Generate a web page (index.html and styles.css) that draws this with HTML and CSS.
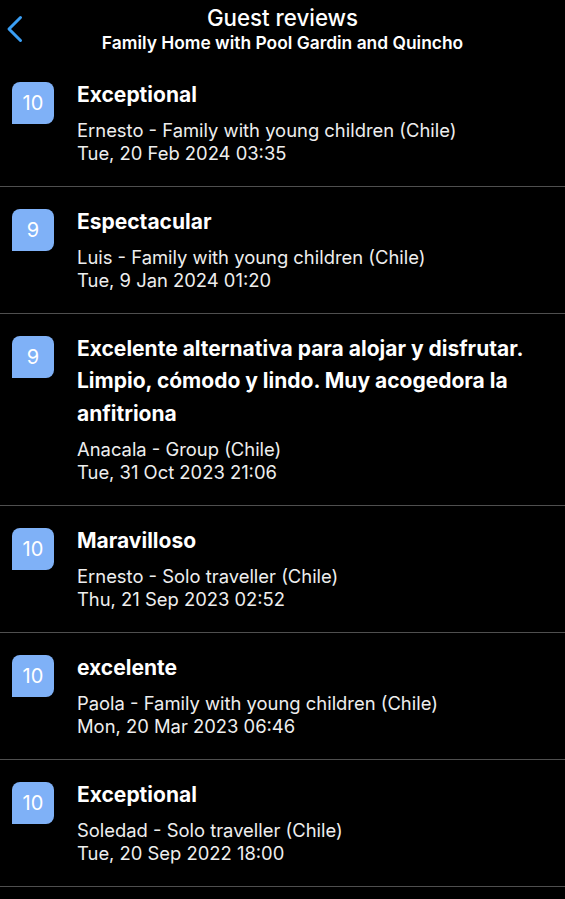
FILE: index.html
```html
<!DOCTYPE html>
<html lang="en">
<head>
    <meta charset="UTF-8">
    <meta name="viewport" content="width=device-width, initial-scale=1.0">
    <title>Guest reviews</title>
    <link rel="stylesheet" href="styles.css">
</head>
<body>
    <header class="top-bar">
        <a href="#" class="back-btn" aria-label="Back">
            <svg width="18" height="28" viewBox="0 0 18 28"><path d="M14.5 2.5 L3 14 L14.5 25.5" fill="none" stroke="#3a9ff5" stroke-width="3" stroke-linecap="round" stroke-linejoin="round"/></svg>
        </a>
        <div class="titles">
            <h1>Guest reviews</h1>
            <p class="subtitle">Family Home with Pool Gardin and Quincho</p>
        </div>
    </header>

    <ul class="reviews">
        <li class="review">
            <div class="score">10</div>
            <div class="review-body">
                <h2>Exceptional</h2>
                <p class="meta">Ernesto - Family with young children (Chile)<br>Tue, 20 Feb 2024 03:35</p>
            </div>
        </li>
        <li class="review">
            <div class="score">9</div>
            <div class="review-body">
                <h2>Espectacular</h2>
                <p class="meta">Luis - Family with young children (Chile)<br>Tue, 9 Jan 2024 01:20</p>
            </div>
        </li>
        <li class="review">
            <div class="score">9</div>
            <div class="review-body">
                <h2>Excelente alternativa para alojar y disfrutar. Limpio, cómodo y lindo. Muy acogedora la anfitriona</h2>
                <p class="meta">Anacala - Group (Chile)<br>Tue, 31 Oct 2023 21:06</p>
            </div>
        </li>
        <li class="review">
            <div class="score">10</div>
            <div class="review-body">
                <h2>Maravilloso</h2>
                <p class="meta">Ernesto - Solo traveller (Chile)<br>Thu, 21 Sep 2023 02:52</p>
            </div>
        </li>
        <li class="review">
            <div class="score">10</div>
            <div class="review-body">
                <h2>excelente</h2>
                <p class="meta">Paola - Family with young children (Chile)<br>Mon, 20 Mar 2023 06:46</p>
            </div>
        </li>
        <li class="review">
            <div class="score">10</div>
            <div class="review-body">
                <h2>Exceptional</h2>
                <p class="meta">Soledad - Solo traveller (Chile)<br>Tue, 20 Sep 2022 18:00</p>
            </div>
        </li>
    </ul>
</body>
</html>
```

FILE: styles.css
```css
body {
    margin: 0;
    background-color: #000;
    color: #fff;
    font-family: 'Inter', 'Noto Sans', sans-serif;
}

.top-bar {
    position: relative;
    height: 60px;
    text-align: center;
}

.back-btn {
    position: absolute;
    left: 6px;
    top: 15px;
}

.titles {
    padding-top: 4px;
}

h1 {
    margin: 0;
    font-size: 22.3px;
    font-weight: 500;
    line-height: 27px;
}

.subtitle {
    margin: 1px 0 0;
    font-size: 17.4px;
    font-weight: 600;
    line-height: 21px;
}

.reviews {
    list-style: none;
    margin: 0;
    padding: 0;
}

.review {
    display: flex;
    align-items: flex-start;
    padding: 18.5px 12px 21px 12px;
    border-bottom: 1.5px solid #4f4f4f;
}

.score {
    flex: 0 0 42px;
    height: 42px;
    margin-top: 3px;
    background-color: #7fb1f7;
    border-radius: 8px 8px 8px 0;
    font-size: 20px;
    line-height: 42px;
    text-align: center;
    color: #fff;
}

.review-body {
    margin-left: 23px;
}

h2 {
    margin: 0;
    font-size: 21px;
    font-weight: 700;
    line-height: 32.5px;
}

.meta {
    margin: 8px 0 0;
    font-size: 18.4px;
    line-height: 23px;
    color: #eee;
}
```
